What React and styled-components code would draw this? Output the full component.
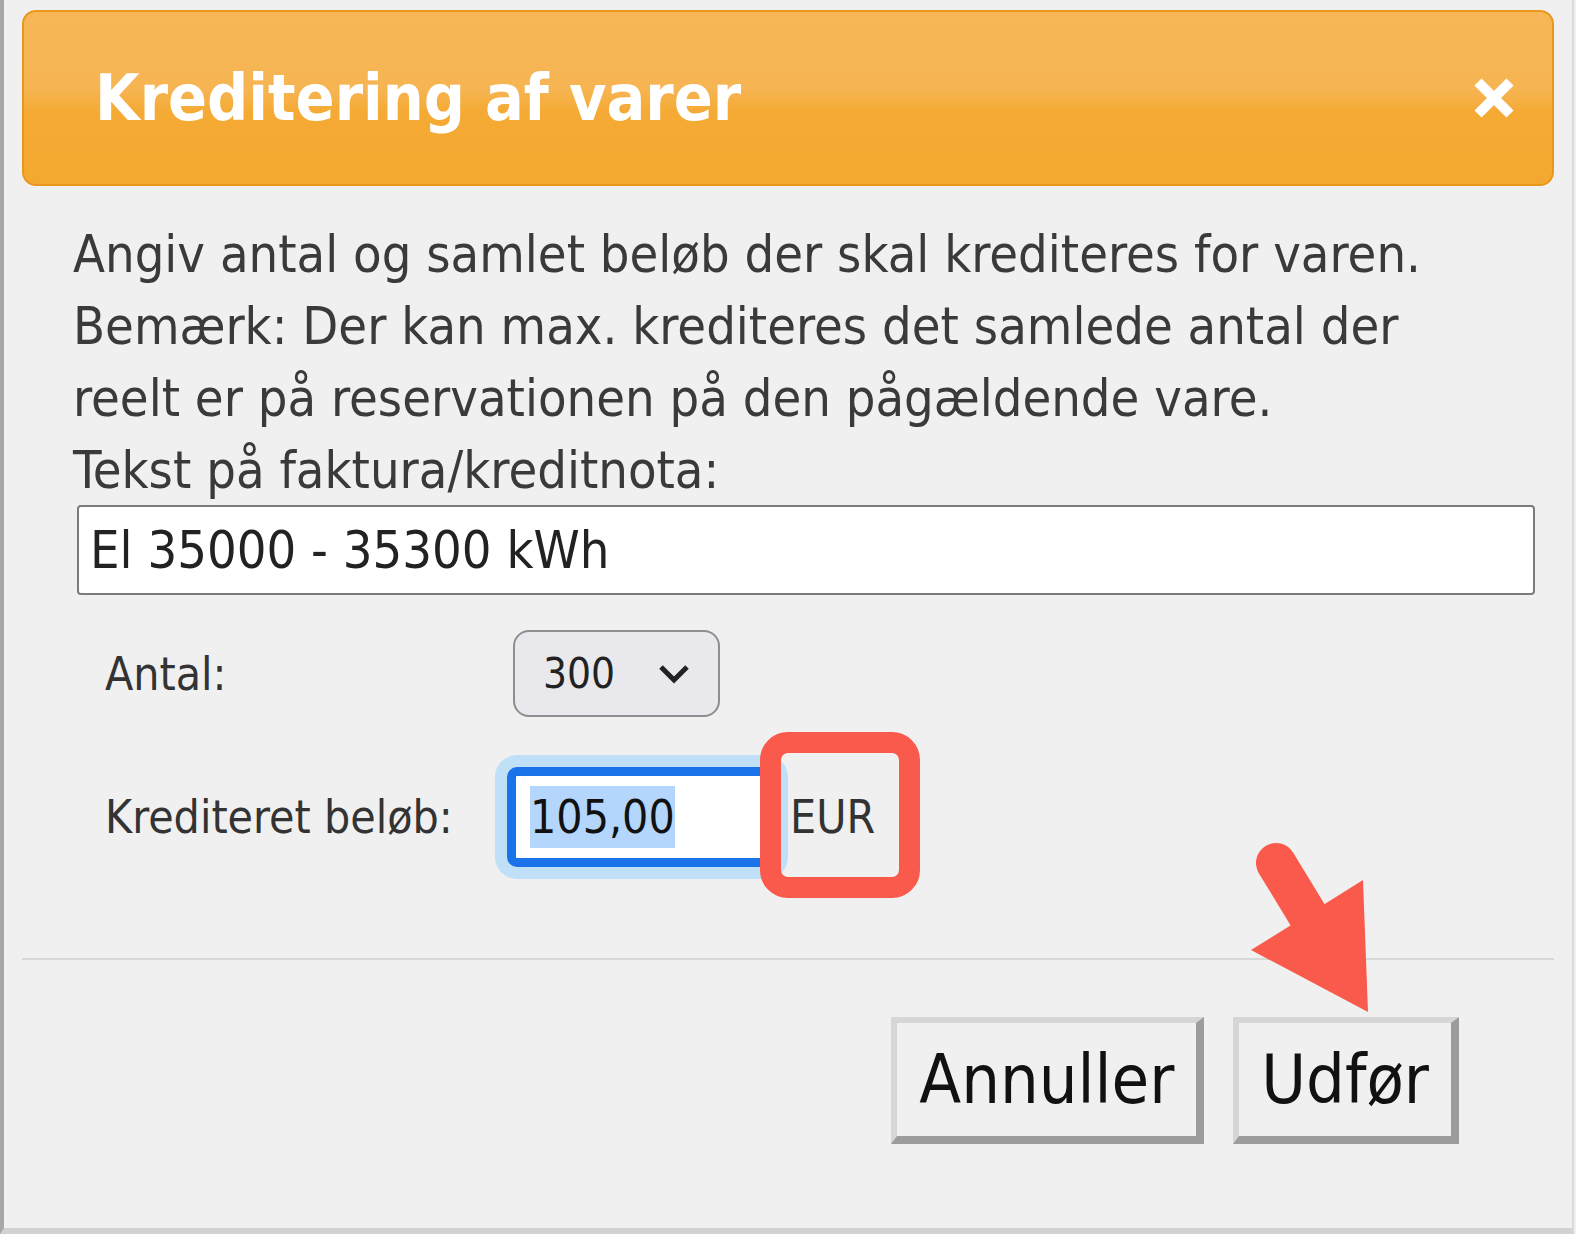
import React from 'react';
import styled, { createGlobalStyle } from 'styled-components';

const font = `'DejaVu Sans Condensed', 'DejaVu Sans', 'Noto Sans', sans-serif`;

const GlobalStyle = createGlobalStyle`
	html, body {
		margin: 0;
		padding: 0;
		background: #f0f0f0;
	}
`;

const Frame = styled.div`
	box-sizing: border-box;
	width: 1574px;
	height: 1234px;
	background: #f0f0f0;
	border-left: 4px solid #a6a6a6;
	border-right: 2px solid #dadada;
	border-bottom: 6px solid #d2d2d2;
	display: flex;
	flex-direction: column;
	font-family: ${font};
	font-stretch: condensed;
`;

const TitleBar = styled.header`
	box-sizing: border-box;
	margin: 10px 18px 0;
	height: 176px;
	border: 2px solid #e9971d;
	border-radius: 14px;
	background: linear-gradient(#f7b757 0%, #f6b452 45%, #f4aa34 58%, #f3a82f 100%);
	display: flex;
	align-items: center;
	justify-content: space-between;
	padding: 0 37px 0 71px;
`;

const Title = styled.h1`
	margin: 0;
	font-size: 64px;
	line-height: 1;
	font-weight: bold;
	color: #fff;
`;

const Content = styled.div`
	padding: 32px 0 0 69px;
`;

const Intro = styled.p`
	margin: 0;
	font-size: 52px;
	line-height: 72px;
	color: #3a3a3a;
`;

const TextField = styled.input`
	display: block;
	box-sizing: border-box;
	width: 1458px;
	height: 90px;
	margin: -1px 0 0 4px;
	padding: 0 11px;
	border: 2px solid #7b7b7b;
	border-radius: 4px;
	background: #fff;
	font-family: ${font};
	font-stretch: condensed;
	font-size: 52px;
	color: #222;
	outline: none;
`;

const FormGrid = styled.div`
	display: grid;
	grid-template-columns: 402px auto;
	row-gap: 50px;
	align-items: center;
	justify-items: start;
	margin: 35px 0 0 32px;
`;

const Label = styled.span`
	font-size: 46px;
	color: #333;
`;

const SelectBox = styled.div`
	box-sizing: border-box;
	width: 207px;
	height: 87px;
	margin-left: 6px;
	border: 2px solid #8e8e8e;
	border-radius: 16px;
	background: #e9e9ed;
	display: flex;
	align-items: center;
	gap: 43px;
	padding-left: 28px;
	font-size: 42px;
	color: #222;
`;

const AmountRow = styled.div`
	display: flex;
	align-items: center;
`;

const AmountField = styled.div`
	box-sizing: border-box;
	width: 269px;
	height: 100px;
	border: 9px solid #1a73e8;
	border-radius: 10px;
	background: #fff;
	box-shadow: 0 0 0 12px #bfe0f7;
	padding-left: 14px;
	display: flex;
	align-items: center;
	font-size: 46px;
	color: #111;
`;

const Selected = styled.span`
	background: #b4d6fc;
	line-height: 62px;
`;

const Currency = styled.span`
	position: relative;
	margin-left: 14px;
	font-size: 46px;
	color: #333;
`;

const Callout = styled.span`
	position: absolute;
	top: -58px;
	left: -30px;
	right: -45px;
	bottom: -54px;
	border: 21px solid #fa5a4b;
	border-radius: 28px;
	z-index: 1;
`;

const Separator = styled.hr`
	height: 2px;
	margin: 91px 18px 0;
	border: none;
	background: #d8d8d8;
`;

const Footer = styled.div`
	display: flex;
	justify-content: flex-end;
	gap: 29px;
	padding: 57px 113px 0 0;
`;

const ArrowHolder = styled.div`
	position: relative;
`;

const Arrow = styled.svg`
	position: absolute;
	left: 0;
	top: -180px;
	pointer-events: none;
`;

const Button = styled.button`
	box-sizing: border-box;
	height: 127px;
	padding: 0 22px;
	background: #f0f0f0;
	border-style: solid;
	border-width: 6px 8px 8px 6px;
	border-color: #d6d6d6 #9c9c9c #9c9c9c #d6d6d6;
	font-family: ${font};
	font-stretch: condensed;
	font-size: 68px;
	line-height: 1;
	color: #111;
`;

export default function App() {
	return (
		<>
			<GlobalStyle />
			<Frame>
				<TitleBar>
					<Title>Kreditering af varer</Title>
					<svg width='42' height='40' viewBox='0 0 42 40'>
						<path d='M5 4 L37 36 M37 4 L5 36' stroke='#fff' strokeWidth='10' />
					</svg>
				</TitleBar>
				<Content>
					<Intro>
						Angiv antal og samlet beløb der skal krediteres for varen.
						<br />
						Bemærk: Der kan max. krediteres det samlede antal der
						<br />
						reelt er på reservationen på den pågældende vare.
						<br />
						Tekst på faktura/kreditnota:
					</Intro>
					<TextField readOnly value='El 35000 - 35300 kWh' />
					<FormGrid>
						<Label>Antal:</Label>
						<SelectBox>
							<span>300</span>
							<svg width='32' height='20' viewBox='0 0 32 20'>
								<path d='M3 3 L16 16 L29 3' fill='none' stroke='#222' strokeWidth='5' />
							</svg>
						</SelectBox>
						<Label>Krediteret beløb:</Label>
						<AmountRow>
							<AmountField>
								<Selected>105,00</Selected>
							</AmountField>
							<Currency>
								EUR
								<Callout />
							</Currency>
						</AmountRow>
					</FormGrid>
				</Content>
				<Separator />
				<Footer>
					<Button>Annuller</Button>
					<ArrowHolder>
						<Button>Udfør</Button>
						<Arrow width='150' height='180' viewBox='0 0 150 180'>
							<line x1='43' y1='26' x2='82' y2='90' stroke='#fa5a4b' strokeWidth='40' strokeLinecap='round' />
							<polygon points='18,113 130,43 135,175' fill='#fa5a4b' />
						</Arrow>
					</ArrowHolder>
				</Footer>
			</Frame>
		</>
	);
}
